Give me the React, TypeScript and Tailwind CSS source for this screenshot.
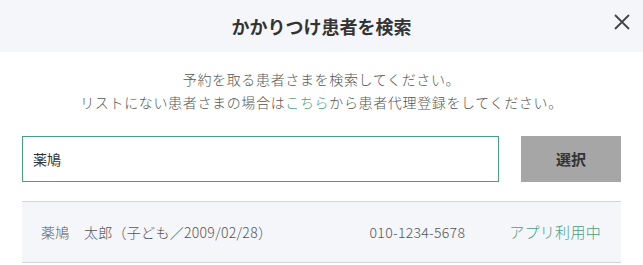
import React from "react";

const font = { fontFamily: '"Noto Sans CJK JP", "Noto Sans", sans-serif' };

export default function App() {
  return (
    <div
      className="w-[643px] h-[265px] bg-white overflow-hidden text-[#555]"
      style={font}
    >
      {/* ヘッダー */}
      <div className="relative h-[52px] bg-[#f5f6fa] flex items-center justify-center">
        <h1 className="text-[18px] font-bold text-[#333] leading-none">かかりつけ患者を検索</h1>
        <button className="absolute right-[13px] top-[14px] text-[#444]">
          <svg width="16" height="16" viewBox="0 0 16 16" fill="none" stroke="currentColor" strokeWidth="1.8">
            <path d="M1 1 L15 15 M15 1 L1 15" />
          </svg>
        </button>
      </div>

      {/* 説明文 */}
      <div className="pt-[16px] text-center text-[14px] leading-[23px] tracking-[0.65px] font-light">
        <p>予約を取る患者さまを検索してください。</p>
        <p>
          リストにない患者さまの場合は
          <span className="text-[#4a9f80]">こちら</span>
          から患者代理登録をしてください。
        </p>
      </div>

      {/* 検索 */}
      <div className="flex gap-[22px] px-[22px] mt-[22px]">
        <input
          defaultValue="薬鳩"
          className="flex-1 h-[46px] border border-[#4a9f80] px-[10px] text-[14px] text-[#333] outline-none"
          style={font}
        />
        <button className="w-[100px] h-[46px] bg-[#a6a6a6] text-[15px] font-bold text-[#333]">
          選択
        </button>
      </div>

      {/* 結果 */}
      <div className="mx-[22px] mt-[19px] h-[62px] bg-[#f5f6fa] border-y border-[#d4d4d8] flex items-center pl-[19px] pr-[20px] text-[14px] tracking-[0.3px] font-light">
        <span className="flex-1">薬鳩　太郎（子ども／2009/02/28）</span>
        <span>010-1234-5678</span>
        <span className="ml-[44px] text-[#4a9f80] text-[15px]">アプリ利用中</span>
      </div>
    </div>
  );
}
